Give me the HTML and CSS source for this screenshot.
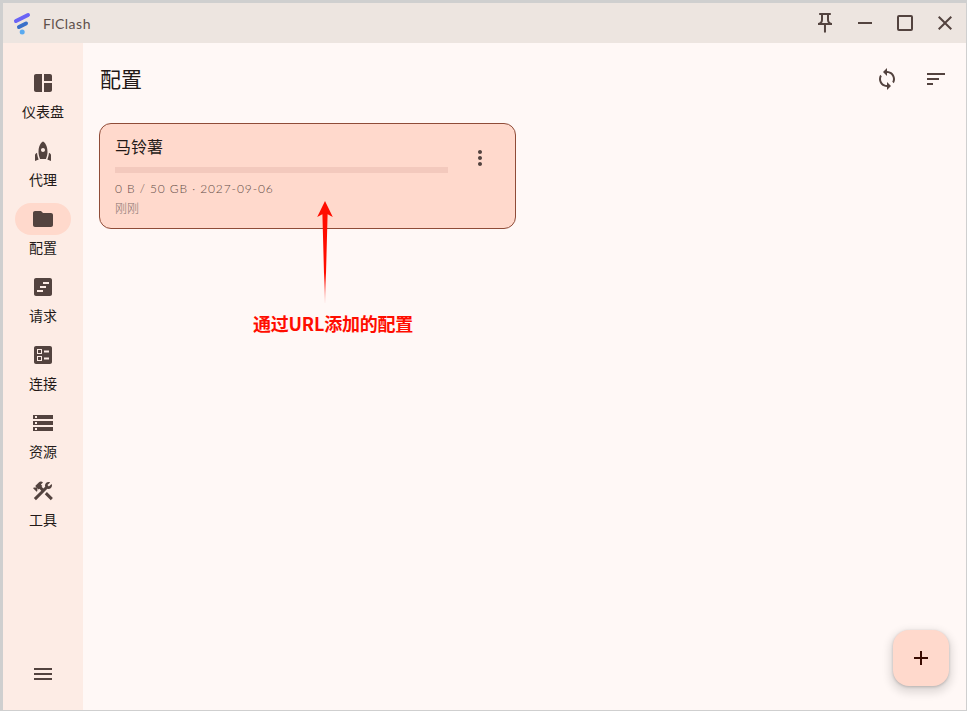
FILE: index.html
```html
<!DOCTYPE html>
<html lang="zh">
<head>
<meta charset="utf-8">
<title>FlClash</title>
<link rel="stylesheet" href="styles.css">
</head>
<body>
<div class="window">
  <header class="titlebar">
    <div class="brand">
      <svg class="logo" viewBox="0 0 24 24"><path class="logo-a" d="M5 10 L17 4"/><path class="logo-b" d="M8 16 L15 12.5"/><circle class="logo-c" cx="11.2" cy="21" r="2.5"/></svg>
      <span class="app-name">FlClash</span>
    </div>
    <div class="win-buttons">
      <button class="win-btn"><svg class="ico" viewBox="0 0 24 24"><path d="M14 4v5c0 1.12.37 2.16 1 3H9c.65-.86 1-1.9 1-3V4h4m3-2H7c-.55 0-1 .45-1 1s.45 1 1 1h1v5c0 1.66-1.34 3-3 3v2h5.97v7l1 1 1-1v-7H19v-2c-1.66 0-3-1.34-3-3V4h1c.55 0 1-.45 1-1s-.45-1-1-1z"/></svg></button>
      <button class="win-btn"><svg class="ico" viewBox="0 0 24 24"><path d="M5 11h14v2H5z"/></svg></button>
      <button class="win-btn"><svg class="ico" viewBox="0 0 24 24"><path d="M6 4h12a2 2 0 0 1 2 2v12a2 2 0 0 1-2 2H6a2 2 0 0 1-2-2V6a2 2 0 0 1 2-2zm0 2v12h12V6H6z"/></svg></button>
      <button class="win-btn"><svg class="ico" viewBox="0 0 24 24"><path d="M19 6.41 17.59 5 12 10.59 6.41 5 5 6.41 10.59 12 5 17.59 6.41 19 12 13.41 17.59 19 19 17.59 13.41 12z"/></svg></button>
    </div>
  </header>
  <div class="body">
    <nav class="sidebar">
      <div class="nav-list">
        <div class="nav-item"><span class="pill"><svg class="ico" viewBox="0 0 24 24"><path d="M11 21H5c-1.1 0-2-.9-2-2V5c0-1.1.9-2 2-2h6v18zm2 0h6c1.1 0 2-.9 2-2v-7h-8v9zm8-11V5c0-1.1-.9-2-2-2h-6v7h8z"/></svg></span><span class="nav-label">仪表盘</span></div>
        <div class="nav-item"><span class="pill"><svg class="ico" viewBox="0 0 24 24"><path d="M12 2.5s4.5 2.04 4.5 10.5c0 2.49-1.04 5.57-1.6 7H9.1c-.56-1.43-1.6-4.51-1.6-7C7.5 4.54 12 2.5 12 2.5zm2 8.5c0-1.1-.9-2-2-2s-2 .9-2 2 .9 2 2 2 2-.9 2-2zm-6.31 9.52c-.48-1.23-1.52-4.17-1.67-6.87l-1.13.75c-.56.38-.89 1-.89 1.67V22l3.69-1.48zM20 22v-5.93c0-.67-.33-1.29-.89-1.66l-1.13-.75c-.15 2.69-1.2 5.64-1.67 6.87L20 22z"/></svg></span><span class="nav-label">代理</span></div>
        <div class="nav-item"><span class="pill active"><svg class="ico" viewBox="0 0 24 24"><path d="M10 4H4c-1.1 0-1.99.9-1.99 2L2 18c0 1.1.9 2 2 2h16c1.1 0 2-.9 2-2V8c0-1.1-.9-2-2-2h-8l-2-2z"/></svg></span><span class="nav-label">配置</span></div>
        <div class="nav-item"><span class="pill"><svg class="ico" viewBox="0 0 24 24"><path d="M19 3H5c-1.1 0-2 .9-2 2v14c0 1.1.9 2 2 2h14c1.1 0 2-.9 2-2V5c0-1.1-.9-2-2-2zm-7 14H6v-2h6v2zm3-4H9v-2h6v2zm3-4h-6V7h6v2z"/></svg></span><span class="nav-label">请求</span></div>
        <div class="nav-item"><span class="pill"><svg class="ico" viewBox="0 0 24 24"><path d="M13 9.5h5v-2h-5v2zm0 7h5v-2h-5v2zm6 4.5H5c-1.1 0-2-.9-2-2V5c0-1.1.9-2 2-2h14c1.1 0 2 .9 2 2v14c0 1.1-.9 2-2 2zM6 11h5V6H6v5zm1-4h3v3H7V7zM6 18h5v-5H6v5zm1-4h3v3H7v-3z"/></svg></span><span class="nav-label">连接</span></div>
        <div class="nav-item"><span class="pill"><svg class="ico" viewBox="0 0 24 24"><path d="M2 20h20v-4H2v4zm2-3h2v2H4v-2zM2 4v4h20V4H2zm4 3H4V5h2v2zm-4 7h20v-4H2v4zm2-3h2v2H4v-2z"/></svg></span><span class="nav-label">资源</span></div>
        <div class="nav-item"><span class="pill"><svg class="ico" viewBox="0 0 24 24"><path d="M13.783 15.172l2.121-2.121 5.996 5.996-2.121 2.121zM17.5 10c1.93 0 3.5-1.57 3.5-3.5 0-.58-.16-1.12-.41-1.6l-2.7 2.7-1.49-1.49 2.7-2.7c-.48-.25-1.02-.41-1.6-.41C15.57 3 14 4.57 14 6.5c0 .41.08.8.21 1.16l-1.85 1.85-1.78-1.78.71-.71-1.41-1.41L12 3.49c-1.17-1.17-3.07-1.17-4.24 0L4.22 7.03l1.41 1.41H2.81l-.71.71 3.54 3.54.71-.71V9.15l1.41 1.41.71-.71 1.78 1.78-7.41 7.41 2.12 2.12L16.34 9.79c.36.13.75.21 1.16.21z"/></svg></span><span class="nav-label">工具</span></div>
      </div>
      <svg class="ico menu-ico" viewBox="0 0 24 24"><path d="M3 18h18v-2H3v2zm0-5h18v-2H3v2zm0-7v2h18V6H3z"/></svg>
    </nav>
    <main class="main">
      <div class="page-head">
        <h1 class="page-title">配置</h1>
        <div class="page-actions">
          <svg class="ico" viewBox="0 0 24 24"><path d="M12 4V1L8 5l4 4V6c3.31 0 6 2.69 6 6 0 1.01-.25 1.97-.7 2.8l1.46 1.46C19.54 15.03 20 13.57 20 12c0-4.42-3.58-8-8-8zm0 14c-3.31 0-6-2.69-6-6 0-1.01.25-1.97.7-2.8L5.24 7.74C4.46 8.97 4 10.43 4 12c0 4.42 3.58 8 8 8v3l4-4-4-4v3z"/></svg>
          <svg class="ico" viewBox="0 0 24 24"><path d="M3 18h6v-2H3v2zM3 6v2h18V6H3zm0 7h12v-2H3v2z"/></svg>
        </div>
      </div>
      <section class="card">
        <div class="card-body">
          <div class="card-title">马铃薯</div>
          <div class="progress"></div>
          <div class="card-meta">0 B / 50 GB · 2027-09-06</div>
          <div class="card-time">刚刚</div>
        </div>
        <svg class="ico card-more" viewBox="0 0 24 24"><path d="M12 8c1.1 0 2-.9 2-2s-.9-2-2-2-2 .9-2 2 .9 2 2 2zm0 2c-1.1 0-2 .9-2 2s.9 2 2 2 2-.9 2-2-.9-2-2-2zm0 6c-1.1 0-2 .9-2 2s.9 2 2 2 2-.9 2-2-.9-2-2-2z"/></svg>
      </section>
      <button class="fab"><svg class="ico fab-ico" viewBox="0 0 24 24"><path d="M19 13h-6v6h-2v-6H5v-2h6V5h2v6h6v2z"/></svg></button>
      <svg class="arrow" viewBox="0 0 20 104">
        <defs><linearGradient id="fade" x1="0" y1="0" x2="0" y2="1"><stop offset="0.7" stop-color="#ff0d00"/><stop offset="1" stop-color="#ff0d00" stop-opacity="0.1"/></linearGradient></defs>
        <path fill="url(#fade)" d="M10 1 L17.8 17 L12.6 14.2 L10.2 103 L9.8 103 L7.4 14.2 L2.2 17 Z"/>
      </svg>
      <div class="note">通过URL添加的配置</div>
    </main>
  </div>
</div>
</body>
</html>
```
FILE: styles.css
```css
* { box-sizing: border-box; }
html, body { margin: 0; height: 100%; }
body {
  background: #cfcfcf;
  padding: 3px 1px 1px 3px;
  font-family: "Lato", "Noto Sans CJK SC", sans-serif;
  color: #231917;
  overflow: hidden;
}
.window { display: flex; flex-direction: column; height: 100%; }
.ico { display: block; width: 24px; height: 24px; fill: #53433f; flex: none; }

.titlebar {
  height: 40px;
  flex: none;
  background: #ede5e0;
  display: flex;
  align-items: center;
  justify-content: space-between;
  padding: 0 1px 0 8px;
}
.brand { display: flex; align-items: center; gap: 8px; }
.logo { width: 24px; height: 24px; display: block; }
.logo-a, .logo-b { fill: none; stroke-linecap: round; stroke-width: 4; }
.logo-a { stroke: #6a63f5; }
.logo-b { stroke: #3a70c9; }
.logo-c { fill: #5aaaf0; }
.app-name { font-size: 14px; letter-spacing: 0.5px; color: #5e504b; }
.win-buttons { display: flex; }
.win-btn {
  width: 40px;
  height: 40px;
  border: 0;
  padding: 0;
  background: none;
  display: flex;
  align-items: center;
  justify-content: center;
}

.body { flex: 1; display: flex; min-height: 0; }
.sidebar {
  width: 80px;
  flex: none;
  background: #fdece5;
  display: flex;
  flex-direction: column;
  justify-content: space-between;
  align-items: center;
  padding: 24px 0 24px;
}
.nav-list { display: flex; flex-direction: column; align-items: center; }
.nav-item {
  height: 68px;
  display: flex;
  flex-direction: column;
  align-items: center;
}
.pill {
  width: 56px;
  height: 32px;
  border-radius: 16px;
  display: flex;
  align-items: center;
  justify-content: center;
}
.pill.active { background: #ffd9cc; }
.nav-label { margin-top: 5px; font-size: 14px; line-height: 16px; color: #231917; }

.main { flex: 1; position: relative; background: #fff8f6; min-width: 0; }
.page-head {
  height: 72px;
  display: flex;
  align-items: center;
  justify-content: space-between;
  padding: 0 18px 0 17px;
}
.page-title { margin: 0; font-size: 21px; font-weight: 400; line-height: 28px; color: #231917; }
.page-actions { display: flex; gap: 25px; }

.card {
  width: 417px;
  height: 106px;
  margin: 8px 0 0 16px;
  background: #ffd9cc;
  border: 1px solid #8f4c38;
  border-radius: 12px;
  display: flex;
  gap: 20px;
  padding: 11px 23px 11px 15px;
}
.card-body { flex: 1; min-width: 0; }
.card-title { font-size: 16px; line-height: 24px; color: #231917; }
.progress { height: 6px; margin-top: 8px; background: #f3c9bd; }
.card-meta { margin-top: 8px; font-size: 12px; line-height: 16px; font-weight: 300; letter-spacing: 0.9px; color: #5f4d47; }
.card-time { margin-top: 4px; font-size: 12px; line-height: 16px; font-weight: 300; color: #85736e; }
.card-more { margin-top: 11px; }

.fab {
  position: absolute;
  right: 17px;
  bottom: 24px;
  width: 56px;
  height: 56px;
  border: 0;
  padding: 0;
  border-radius: 16px;
  background: #ffd9cc;
  box-shadow: 0 4px 8px 3px rgba(0, 0, 0, 0.12), 0 1px 3px rgba(0, 0, 0, 0.2);
  display: flex;
  align-items: center;
  justify-content: center;
}
.fab-ico { fill: #3a0b01; }

.arrow { position: absolute; left: 232px; top: 157px; width: 20px; height: 104px; display: block; }
.note {
  position: absolute;
  left: 170px;
  top: 268px;
  font-size: 18px;
  letter-spacing: -0.2px;
  line-height: 24px;
  font-weight: 700;
  color: #ff0d00;
  font-family: "Noto Sans CJK SC", "Liberation Sans", sans-serif;
}
```
